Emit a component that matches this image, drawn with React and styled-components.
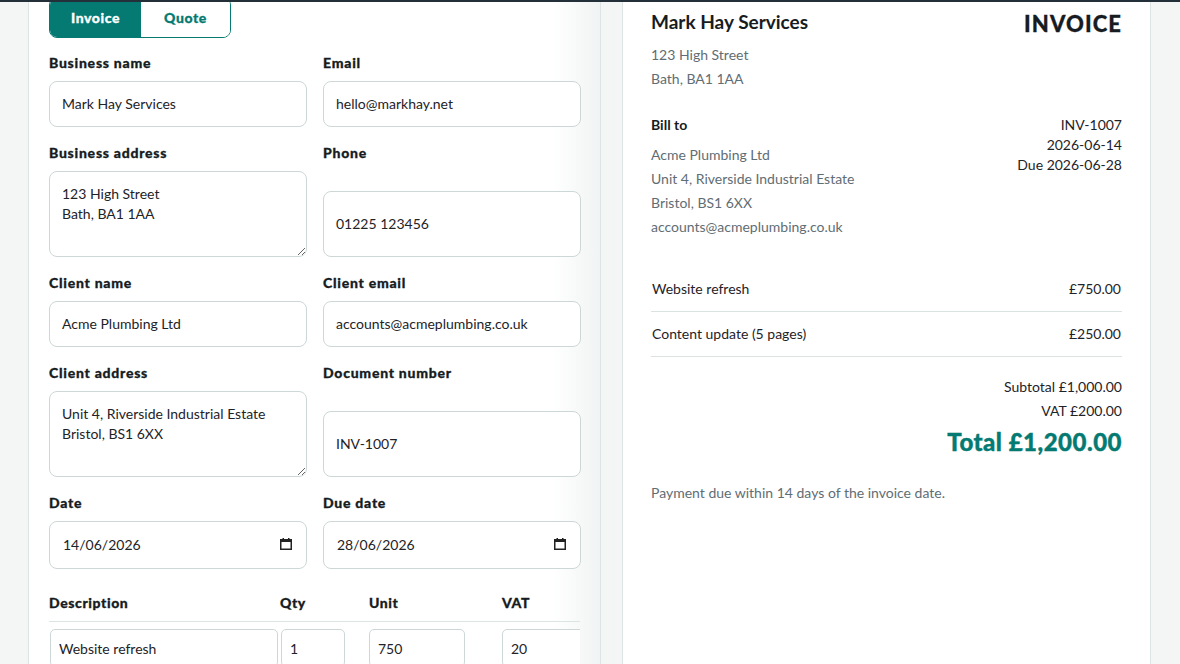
import React from "react";
import styled, { createGlobalStyle } from "styled-components";

const teal = "#047a72";
const ink = "#161c22";
const muted = "#5f6d74";
const heavy = `"Lato Black", "Lato Heavy", Lato, "Noto Sans", sans-serif`;

const GlobalStyle = createGlobalStyle`
  * { box-sizing: border-box; }
  html, body { margin: 0; padding: 0; }
  body {
    background: #f4f6f6;
    font-family: Lato, "Noto Sans", sans-serif;
    color: ${ink};
    overflow: hidden;
  }
`;

const HeaderEdge = styled.div`
  position: fixed;
  top: 0;
  left: 0;
  right: 0;
  height: 2px;
  background: #243039;
  z-index: 5;
`;

const Page = styled.main`
  display: grid;
  grid-template-columns: 573px 529px;
  column-gap: 21px;
  align-items: start;
  padding: 0 29px 0 28px;
  margin-top: -24px;
`;

const Panel = styled.section`
  background: #fff;
  border: 1px solid #dde4e4;
  min-height: 720px;
`;

const FormPanel = styled(Panel)`
  padding: 20px 20px;
  background: linear-gradient(to right, #fff calc(100% - 48px), #f1f4f4);
`;

const PreviewPanel = styled(Panel)`
  padding: 33px 28px;
`;

/* segmented switch between document kinds */
const Tabs = styled.div`
  display: inline-flex;
  border: 1px solid ${teal};
  border-radius: 8px;
  overflow: hidden;
  height: 41px;
  margin-bottom: 16px;
`;

const Tab = styled.button`
  width: ${(p) => p.$w}px;
  border: none;
  font: 900 14px ${heavy};
  letter-spacing: 0.6px;
  -webkit-text-stroke: 0.3px currentColor;
  background: ${(p) => (p.$active ? teal : "#fff")};
  color: ${(p) => (p.$active ? "#fff" : teal)};
  padding: 0;
`;

const FieldGrid = styled.div`
  display: grid;
  grid-template-columns: 258px 258px;
  column-gap: 16px;
  row-gap: 17px;
`;

const Field = styled.label`
  display: flex;
  flex-direction: column;
`;

const Label = styled.span`
  font: 900 14px/18px ${heavy};
  letter-spacing: 0.75px;
  -webkit-text-stroke: 0.3px currentColor;
  color: ${ink};
  margin-bottom: 9px;
`;

const controlBase = `
  border: 1px solid #cdd7d7;
  border-radius: 8px;
  background: #fff;
  font: 400 14px Lato, "Noto Sans", sans-serif;
  color: #1e2328;
  outline: none;
`;

const Input = styled.input`
  ${controlBase}
  width: 100%;
  height: ${(p) => p.$h || 46}px;
  padding: 0 12px 2px;
  margin-top: ${(p) => (p.$push ? "auto" : "0")};
`;

const TextArea = styled.textarea`
  ${controlBase}
  width: 100%;
  height: 86px;
  padding: 12px 12px;
  line-height: 20px;
  resize: vertical;
`;

const DateBox = styled.div`
  ${controlBase}
  display: flex;
  align-items: center;
  height: 48px;
  padding: 0 14px 2px 13px;
`;

const DateText = styled.input`
  flex: 1;
  min-width: 0;
  border: none;
  outline: none;
  background: transparent;
  font: 400 14px Lato, "Noto Sans", sans-serif;
  color: #1e2328;
  padding: 0;
`;

const CalendarIcon = () => (
  <svg width="12" height="12" viewBox="0 0 12 12" aria-hidden="true">
    <rect x="0.75" y="1.75" width="10.5" height="9.5" fill="none" stroke="#222" strokeWidth="1.5" />
    <rect x="0" y="1" width="12" height="3" fill="#222" />
    <rect x="2.5" y="0" width="1.5" height="2" fill="#222" />
    <rect x="8" y="0" width="1.5" height="2" fill="#222" />
  </svg>
);

const DateField = ({ label, value }) => (
  <Field>
    <Label>{label}</Label>
    <DateBox>
      <DateText defaultValue={value} />
      <CalendarIcon />
    </DateBox>
  </Field>
);

/* line items editor */
const Items = styled.div`
  margin-top: 25px;
  overflow: hidden;
`;

const ItemsHead = styled.div`
  display: grid;
  grid-template-columns: 231px 89px 133px 79px;
  border-bottom: 1px solid #dde4e4;
  padding-bottom: 9px;
  margin-bottom: 7px;
`;

const HeadCell = styled.span`
  font: 900 14px/18px ${heavy};
  letter-spacing: 0.6px;
  -webkit-text-stroke: 0.3px currentColor;
  color: ${ink};
`;

const ItemRow = styled.div`
  display: grid;
  grid-template-columns: 231px 89px 133px 79px;
`;

const CellInput = styled.input`
  ${controlBase}
  width: ${(p) => p.$w}px;
  height: 38px;
  padding: 0 8px;
  border-radius: 5px;
  margin-left: ${(p) => p.$ml || 0}px;
`;

/* document preview */
const DocHead = styled.div`
  display: flex;
  justify-content: space-between;
  align-items: flex-start;
`;

const BizName = styled.div`
  font: 700 19px/24px Lato, "Noto Sans", sans-serif;
  color: ${ink};
`;

const DocTitle = styled.div`
  font: 900 22px/28px ${heavy};
  letter-spacing: 1.1px;
  -webkit-text-stroke: 0.3px currentColor;
  color: ${ink};
`;

const MutedLines = styled.div`
  margin-top: ${(p) => p.$mt || 0}px;
  font-size: 14px;
  line-height: 24px;
  color: ${muted};
`;

const BillRow = styled.div`
  display: flex;
  justify-content: space-between;
  margin-top: 24px;
`;

const SmallHeading = styled.div`
  font: 700 14px/20px Lato, "Noto Sans", sans-serif;
  color: ${ink};
`;

const Meta = styled.div`
  text-align: right;
  font-size: 14px;
  line-height: 20px;
  color: #1e2328;
`;

const LineList = styled.div`
  margin-top: 28px;
`;

const LineItem = styled.div`
  display: flex;
  justify-content: space-between;
  padding: 12px 1px;
  font-size: 14px;
  line-height: 20px;
  color: #1e2328;
  border-bottom: 1px solid #dbe2e2;
`;

const Totals = styled.div`
  margin-top: 18px;
  text-align: right;
  font-size: 14px;
  line-height: 24px;
  color: #1e2328;
`;

const Grand = styled.div`
  margin-top: 4px;
  font: 900 24px/30px ${heavy};
  letter-spacing: 0.5px;
  -webkit-text-stroke: 0.4px currentColor;
  color: ${teal};
`;

const Note = styled.p`
  margin: 26px 0 0;
  font-size: 14px;
  line-height: 20px;
  color: ${muted};
`;

const items = [
  { desc: "Website refresh", qty: 1, unit: 750, vat: 20 },
  { desc: "Content update (5 pages)", qty: 5, unit: 50, vat: 20 },
];

const money = (n) =>
  "£" + n.toLocaleString("en-GB", { minimumFractionDigits: 2, maximumFractionDigits: 2 });

export default function App() {
  const subtotal = items.reduce((s, i) => s + i.qty * i.unit, 0);
  const vat = items.reduce((s, i) => s + (i.qty * i.unit * i.vat) / 100, 0);

  return (
    <>
      <GlobalStyle />
      <HeaderEdge />
      <Page>
        <FormPanel>
          <Tabs>
            <Tab $active $w={91}>Invoice</Tab>
            <Tab $w={89}>Quote</Tab>
          </Tabs>
          <FieldGrid>
            <Field>
              <Label>Business name</Label>
              <Input defaultValue="Mark Hay Services" />
            </Field>
            <Field>
              <Label>Email</Label>
              <Input defaultValue="hello@markhay.net" />
            </Field>
            <Field>
              <Label>Business address</Label>
              <TextArea defaultValue={"123 High Street\nBath, BA1 1AA"} />
            </Field>
            <Field>
              <Label>Phone</Label>
              <Input $h={66} $push defaultValue="01225 123456" />
            </Field>
            <Field>
              <Label>Client name</Label>
              <Input defaultValue="Acme Plumbing Ltd" />
            </Field>
            <Field>
              <Label>Client email</Label>
              <Input defaultValue="accounts@acmeplumbing.co.uk" />
            </Field>
            <Field>
              <Label>Client address</Label>
              <TextArea defaultValue={"Unit 4, Riverside Industrial Estate\nBristol, BS1 6XX"} />
            </Field>
            <Field>
              <Label>Document number</Label>
              <Input $h={66} $push defaultValue="INV-1007" />
            </Field>
            <DateField label="Date" value="14/06/2026" />
            <DateField label="Due date" value="28/06/2026" />
          </FieldGrid>
          <Items>
            <ItemsHead>
              <HeadCell>Description</HeadCell>
              <HeadCell>Qty</HeadCell>
              <HeadCell>Unit</HeadCell>
              <HeadCell>VAT</HeadCell>
            </ItemsHead>
            {items.map((it) => (
              <ItemRow key={it.desc}>
                <CellInput $w={228} $ml={1} defaultValue={it.desc} />
                <CellInput $w={64} $ml={1} defaultValue={it.qty} />
                <CellInput $w={96} defaultValue={it.unit} />
                <CellInput $w={96} defaultValue={it.vat} />
              </ItemRow>
            ))}
          </Items>
        </FormPanel>

        <PreviewPanel>
          <DocHead>
            <div>
              <BizName>Mark Hay Services</BizName>
              <MutedLines $mt={9}>
                <div>123 High Street</div>
                <div>Bath, BA1 1AA</div>
              </MutedLines>
            </div>
            <DocTitle>INVOICE</DocTitle>
          </DocHead>

          <BillRow>
            <div>
              <SmallHeading>Bill to</SmallHeading>
              <MutedLines $mt={8}>
                <div>Acme Plumbing Ltd</div>
                <div>Unit 4, Riverside Industrial Estate</div>
                <div>Bristol, BS1 6XX</div>
                <div>accounts@acmeplumbing.co.uk</div>
              </MutedLines>
            </div>
            <Meta>
              <div>INV-1007</div>
              <div>2026-06-14</div>
              <div>Due 2026-06-28</div>
            </Meta>
          </BillRow>

          <LineList>
            {items.map((it) => (
              <LineItem key={it.desc}>
                <span>{it.desc}</span>
                <span>{money(it.qty * it.unit)}</span>
              </LineItem>
            ))}
          </LineList>

          <Totals>
            <div>Subtotal {money(subtotal)}</div>
            <div>VAT {money(vat)}</div>
            <Grand>Total {money(subtotal + vat)}</Grand>
          </Totals>

          <Note>Payment due within 14 days of the invoice date.</Note>
        </PreviewPanel>
      </Page>
    </>
  );
}
